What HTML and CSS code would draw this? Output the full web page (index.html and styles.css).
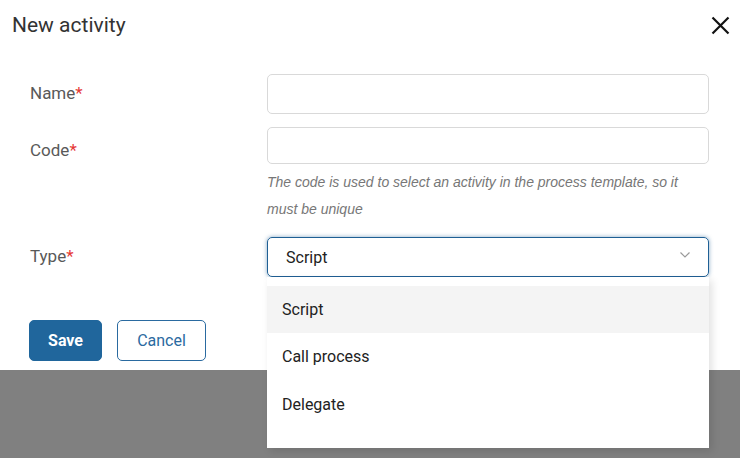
FILE: index.html
```html
<!DOCTYPE html>
<html lang="en">
<head>
<meta charset="utf-8">
<title>New activity</title>
<link rel="stylesheet" href="styles.css">
</head>
<body>
<div class="modal">
  <header class="modal-head">
    <h1 class="modal-title">New activity</h1>
    <button class="close" type="button" aria-label="Close">
      <svg width="19" height="19" viewBox="0 0 19 19"><path d="M1.5 1.5 L17.5 17.5 M17.5 1.5 L1.5 17.5" stroke="#111" stroke-width="2.2" fill="none"/></svg>
    </button>
  </header>
  <form class="form">
    <div class="row">
      <label class="label">Name<span class="req">*</span></label>
      <div class="field"><div class="input input-name"></div></div>
    </div>
    <div class="row">
      <label class="label label-code">Code<span class="req">*</span></label>
      <div class="field">
        <div class="input input-code"></div>
        <p class="hint">The code is used to select an activity in the process template, so it must be unique</p>
      </div>
    </div>
    <div class="row row-type">
      <label class="label">Type<span class="req">*</span></label>
      <div class="field field-select">
        <div class="select">
          <span>Script</span>
          <svg class="chevron" width="10" height="6" viewBox="0 0 10 6"><path d="M0.5 0.5 L5 5 L9.5 0.5" stroke="#9a9a9a" stroke-width="1.2" fill="none"/></svg>
        </div>
        <ul class="menu">
          <li class="opt opt-active">Script</li>
          <li class="opt">Call process</li>
          <li class="opt">Delegate</li>
        </ul>
      </div>
    </div>
    <div class="actions">
      <button type="button" class="btn btn-primary">Save</button>
      <button type="button" class="btn btn-outline">Cancel</button>
    </div>
  </form>
</div>
</body>
</html>
```

FILE: styles.css
```css
* { box-sizing: border-box; }
html, body { margin: 0; padding: 0; }
body {
  background: #808080;
  font-family: Roboto, "Liberation Sans", Arial, sans-serif;
  width: 740px;
  height: 458px;
  overflow: hidden;
}
.modal {
  background: #fff;
  padding-bottom: 9px;
}
.modal-head {
  display: flex;
  justify-content: space-between;
  align-items: flex-start;
  padding: 13px 10px 0 12px;
}
.modal-title {
  margin: 0;
  font-size: 21px;
  line-height: 24px;
  font-weight: 400;
  color: #333;
}
.close {
  border: 0;
  background: none;
  padding: 0;
  margin-top: 3px;
  width: 19px;
  height: 19px;
  display: block;
}
.close svg { display: block; }
.form {
  margin-top: 37px;
  padding: 0 31px 0 30px;
}
.row {
  display: grid;
  grid-template-columns: 237px 1fr;
  margin-bottom: 13px;
}
.row-type { margin-bottom: 0; }
.label {
  font-size: 17px;
  line-height: 20px;
  color: #595959;
  padding-top: 9px;
}
.label-code { padding-top: 13px; }
.req { color: #e53935; }
.input {
  border: 1px solid #d9d9d9;
  border-radius: 5px;
  background: #fff;
}
.input-name { height: 40px; }
.input-code { height: 37px; }
.hint {
  margin: 5px 0 1px;
  font-family: "Liberation Sans", Arial, sans-serif;
  font-size: 14px;
  line-height: 27px;
  font-style: italic;
  color: #777;
}
.field-select { position: relative; }
.select {
  height: 40px;
  border: 1px solid #1f5f94;
  border-radius: 5px;
  box-shadow: 0 0 4px rgba(31, 95, 148, 0.55);
  display: flex;
  align-items: center;
  justify-content: space-between;
  padding: 0 18px 0 18px;
  font-size: 16px;
  color: #222;
}
.chevron { display: block; margin-top: -4px; }
.menu {
  position: absolute;
  top: 100%;
  left: 0;
  right: 0;
  margin: 0;
  padding: 9px 0 19px;
  list-style: none;
  background: #fff;
  box-shadow: 3px 3px 8px rgba(0, 0, 0, 0.12);
  z-index: 2;
}
.opt {
  height: 48px;
  line-height: 48px;
  padding-left: 15px;
  font-size: 16px;
  color: #222;
}
.opt:first-child { height: 47px; line-height: 47px; }
.opt-active { background: #f4f4f4; }
.actions {
  display: flex;
  gap: 15px;
  margin-top: 43px;
  margin-left: -1px;
}
.btn {
  height: 41px;
  border-radius: 5px;
  font-family: inherit;
  font-size: 16px;
  padding: 0;
}
.btn-primary {
  width: 73px;
  background: #20669c;
  border: 1px solid #20669c;
  color: #fff;
  font-weight: 700;
}
.btn-outline {
  width: 89px;
  background: #fff;
  border: 1px solid #2a6aa0;
  color: #2a6aa0;
}
```
